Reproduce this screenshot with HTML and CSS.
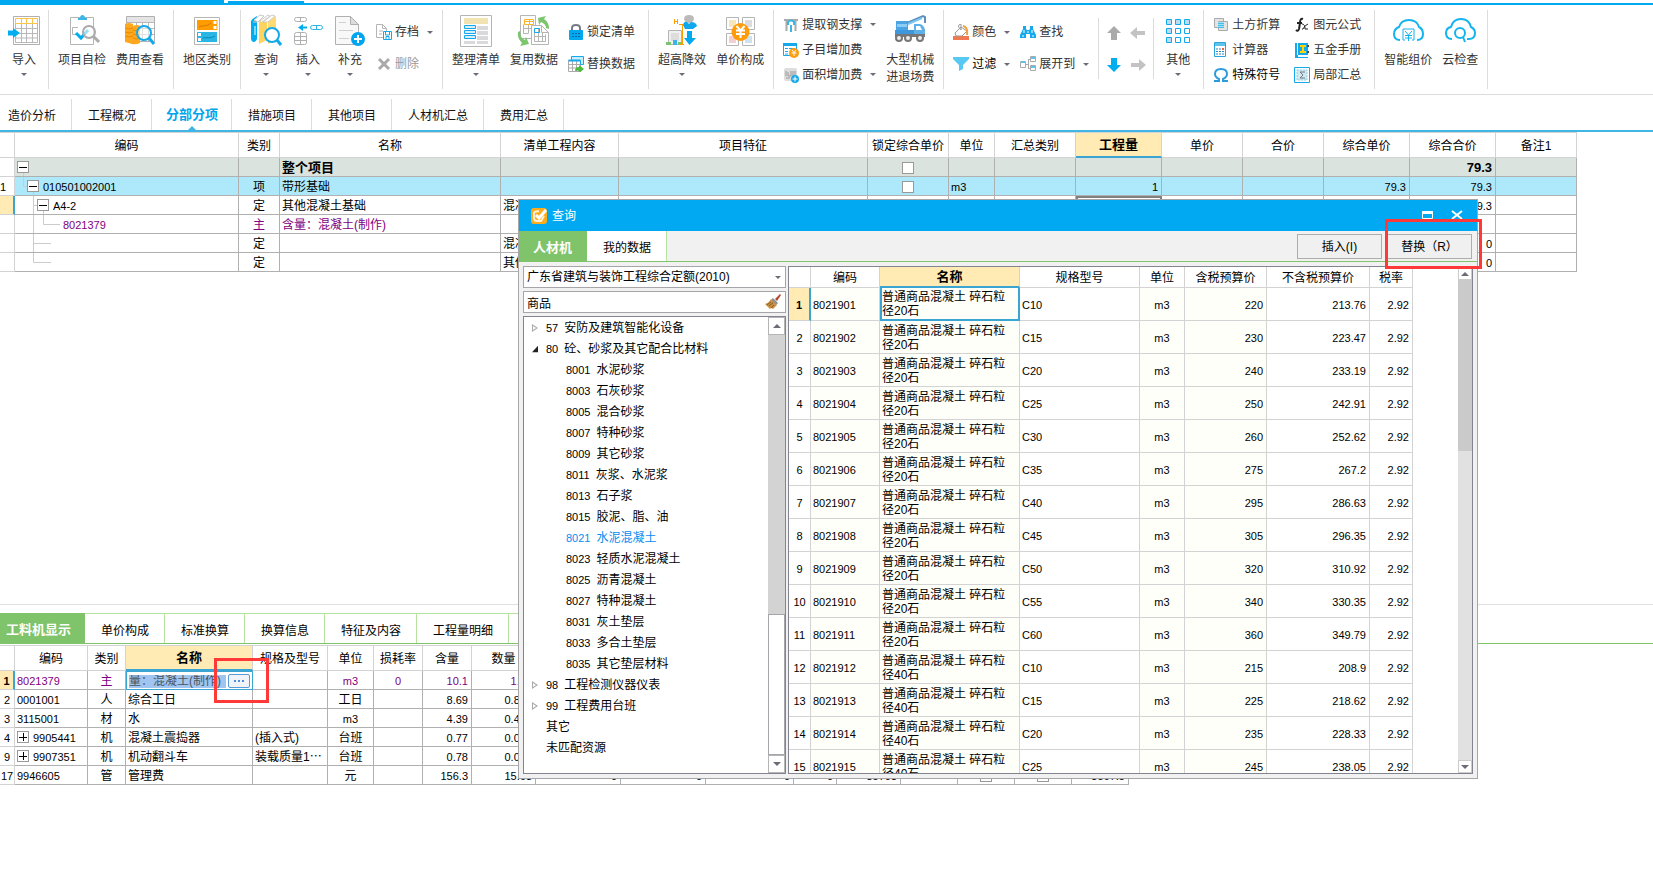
FILE: index.html
```html
<!DOCTYPE html>
<html lang="zh-CN">
<head>
    <meta charset="UTF-8">
    <meta name="viewport" content="width=device-width, initial-scale=1.0">
    <title>分部分项</title>
    <link rel="stylesheet" href="styles.css">
</head>
<body>
    <div class="strip">
        <div class="strip-menu"></div>
        <div class="strip-current"></div>
    </div>

    <header class="ribbon">
        <div class="group group-first">
            <button class="big">
                <svg viewBox="0 0 32 32"><path d="M5.500 1.500h26v28h-26z" fill="#fff" stroke="#b0b0b0"/><path d="M7.500 8v19.500h22V8M7.500 13.500h22M7.500 18.500h22M7.500 23h22M13.500 8v19M18.500 8v19M24.500 8v19" fill="none" stroke="#b8b8b8"/><path d="M7.500 8.500v-5h22v5zM13.500 3v5M18.500 3v5M24.500 3v5" fill="none" stroke="#fbc34a"/><path d="M0 15.500h5V13l7 5-7 5v-2.500H0z" fill="#00aeef"/></svg>
                <span>导入</span><i class="caret"></i>
            </button>
        </div>
        <div class="group">
            <button class="big">
                <svg viewBox="0 0 32 32"><path d="M4.500 2.500h23v27h-23z" fill="#fff" stroke="#b5b5b5"/><path d="M12 5V3h2c0-4 5-4 5 0h2v2z" fill="#3bb4e8"/><path d="M12 12.500H6.500v7H10" fill="none" stroke="#b5b5b5"/><path d="M10 18l5 5 7-8" fill="none" stroke="#00aeef" stroke-width="3"/><circle cx="23" cy="17" r="6" fill="#fff" fill-opacity=".6" stroke="#aaa" stroke-width="2"/><path d="M27 21l6 6" stroke="#aaa" stroke-width="3"/></svg>
                <span>项目自检</span>
            </button>
            <button class="big">
                <svg viewBox="0 0 32 32"><path d="M2.500 1.500h28v25h-28z" fill="#fff" stroke="#b0b0b0"/><path d="M3 2h27v5H3z" fill="#e4e4e4"/><path d="M3 7.500h27M3 13.500h27M3 19.500h27M12.500 7v19M18.500 7v19M24.500 7v19" stroke="#b8b8b8"/><path d="M1 9q4-2 8 0v2q4-2 7 0v17q-4 2-8 1l-7-2z" fill="#ffa81f"/><path d="M1 13q4 2 8 0M1 17q4 2 8 0M1 21q4 2 8 0M9 15q4 2 7 0M9 19q4 2 7 0M9 23q4 2 7 0" fill="none" stroke="#e88b00"/><circle cx="20" cy="18" r="7" fill="#fff" fill-opacity=".55" stroke="#14a9ea" stroke-width="2"/><path d="M25 23l5 6" stroke="#14a9ea" stroke-width="3"/></svg>
                <span>费用查看</span>
            </button>
        </div>
        <div class="group">
            <button class="big">
                <svg viewBox="0 0 32 32"><path d="M3.500 2.500h25v27h-25z" fill="#fff" stroke="#b5b5b5"/><path d="M6 5h20v10H6z" fill="#ff9c00"/><path d="M22 5.500h4v4h-4zM22 10.500h4v4h-4z" fill="#fff" stroke="#ff9c00"/><path d="M8 12c3-2 8 0 12-4" fill="none" stroke="#d57900"/><path d="M6 17h20v10H6z" fill="#29b6e5"/><path d="M6.500 17.500h4v4h-4zM6.500 22.500h4v4h-4z" fill="#fff" stroke="#29b6e5"/><path d="M12 23c4-1 7 1 12-2" fill="none" stroke="#0b86b5"/></svg>
                <span>地区类别</span>
            </button>
        </div>
        <div class="group">
            <button class="big">
                <svg viewBox="0 0 32 32"><path d="M1 6q2-3 6-5v23q-1 3-3 3-3 0-3-4z" fill="#00aeef"/><path d="M3 7h4M4 5l6-5 4 1-6 6z" fill="#fff" stroke="#c8c8c8"/><path d="M5 11v9" stroke="#fff"/><path d="M9 6l8-5v24l-8 4z" fill="#ffd45e"/><path d="M18 5l8-4v24l-8 4z" fill="#ffda72"/><path d="M10 6l8-6 2 1-8 6M13 7l9-7 3 1-7 6z" fill="#fff" stroke="#ccc"/><circle cx="22" cy="20" r="7" fill="#fff" stroke="#14a9ea" stroke-width="2"/><path d="M27 25l4 5" stroke="#14a9ea" stroke-width="3"/></svg>
                <span>查询</span><i class="caret"></i>
            </button>
            <button class="big">
                <svg viewBox="0 0 32 32"><g fill="#fff" stroke="#b0b0b0"><rect x="2.500" y="2.500" width="12" height="4" rx="2"/><path d="M8.500 2v4"/><rect x="2.500" y="17.500" width="12" height="12" rx="2"/><path d="M8.500 17v12M2.500 21.500h12M2.500 25.500h12"/></g><rect x="18.500" y="10.500" width="12" height="4" rx="2" fill="#fff" stroke="#29b6e5"/><path d="M24.500 10v4" stroke="#29b6e5"/><path d="M15 11.500h-4V9l-5 3.500 5 3.500v-2.500h4z" fill="#00aeef"/></svg>
                <span>插入</span><i class="caret"></i>
            </button>
            <button class="big">
                <svg viewBox="0 0 32 32"><path d="M1.500 1.500h15l8 8v20h-23z" fill="#f8f8f8" stroke="#b0b0b0"/><path d="M16.500 1.500v8h8z" fill="#ddd" stroke="#b0b0b0"/><path d="M5 7.500h7M5 15.500h14M5 23.500h10" stroke="#d0d0d0"/><circle cx="24" cy="24" r="7" fill="#00a5ef"/><path d="M24 20v8M20 24h8" stroke="#fff" stroke-width="2"/></svg>
                <span>补充</span><i class="caret"></i>
            </button>
            <div class="stack two">
                <button class="small">
                    <svg viewBox="0 0 16 16"><path d="M.5.500h6l4 4v9H.500z" fill="#fff" stroke="#b5b5b5"/><path d="M6.500.500v4h4M3 7h4M3 10h3" fill="none" stroke="#b5b5b5"/><path d="M7.500 7.500h8v8h-8z" fill="#fff" stroke="#14a9ea"/><path d="M9.500 8v3h4V8M10 15v-2.500h3V15" fill="none" stroke="#14a9ea"/></svg>
                    <span>存档</span><i class="caret"></i>
                </button>
                <button class="small disabled" disabled>
                    <svg viewBox="0 0 16 16"><path d="M3 3l10 10M13 3L3 13" stroke="#aaa" stroke-width="3"/></svg>
                    <span>删除</span>
                </button>
            </div>
        </div>
        <div class="group">
            <button class="big">
                <svg viewBox="0 0 32 32"><path d="M.5.500h31v31H.500z" fill="#fff" stroke="#b5b5b5"/><path d="M4 3h24v6H4z" fill="#f2e3b3"/><path d="M17 11h11v4H17zM17 16h11v4H17zM17 21h11v4H17zM4 26h11v3H4zM17 26h11v3H17z" fill="#d9d9dd"/><path d="M4.500 10.500h11v3h-11zM4.500 15.500h11v3h-11zM4.500 20.500h11v3h-11z" fill="#d6effa" stroke="#14a9ea"/></svg>
                <span>整理清单</span><i class="caret"></i>
            </button>
            <button class="big">
                <svg viewBox="0 0 32 32"><path d="M2.500.500h15v23h-15z" fill="#fff" stroke="#b5b5b5"/><path d="M5.500 9.500v9h5M5.500 13.500h10M10.500 9v9" fill="none" stroke="#b5b5b5"/><path d="M6.500 4.500h9v5h-9zM11.500 4v5M6.500 6.500h9" fill="none" stroke="#fbb52b"/><path d="M13.500 10.500h10l7 7v12h-17z" fill="#fff" stroke="#b5b5b5"/><path d="M23.500 10.500v7h7M16.500 17.500v9h11v-7M16.500 21.500h11M20.500 14v12M24.500 18v8" fill="none" stroke="#b5b5b5"/><path d="M16.500 13.500h5v4h-5z" fill="none" stroke="#14a9ea"/><path d="M20 3l8-2-2 3q5 3 5 10l-3-1q0-4-5-6l-2 3zM2 16q0 7 5 9l1-3 3 7-9 2 2-3q-5-5-4-11z" fill="#7bc56c"/></svg>
                <span>复用数据</span>
            </button>
            <div class="stack two wide">
                <button class="small">
                    <svg viewBox="0 0 16 16"><path d="M4 8V4q0-3 4-3t4 3v4" fill="none" stroke="#777b86" stroke-width="2"/><rect x="1" y="6" width="14" height="10" rx="1" fill="#00a8ef"/><path d="M4 9.500h8M4 12.500h8" stroke="#0767a0" stroke-dasharray="2 1"/></svg>
                    <span>锁定清单</span>
                </button>
                <button class="small">
                    <svg viewBox="0 0 16 16"><path d="M.5 4.500h12v11H.500zM.5 8.500h12M.5 12h12M4.500 4v11M8.500 4v11" fill="#fff" stroke="#aaa"/><path d="M3.500.500h12v8h-3v-4h-9z" fill="#c9eefb" stroke="#14a9ea"/><path d="M.5 4.500h12" stroke="#14a9ea" stroke-width="2"/><path d="M7 15q0-4 4-4V9l5 4-5 4v-2q-2-1-4 0z" fill="#4cbb39"/></svg>
                    <span>替换数据</span>
                </button>
            </div>
        </div>
        <div class="group">
            <button class="big">
                <svg viewBox="0 0 32 32"><path d="M2.500 15.500h13v14h-13z" fill="#f0f0f0" stroke="#b5b5b5"/><path d="M5 18h8v8H5z" fill="#ddd"/><path d="M7 25h4v5H7z" fill="#3bb4e8"/><path d="M0 27h5v3H0zM12 27h5v3h-5z" fill="#7bc56c"/><path d="M8.500 4v5M11.500 4v5M8.500 6.500h3M13 9.500h4M16.500 9v20M14 29.500h4" fill="none" stroke="#ff9c00"/><path d="M18 4q0-4 5-4t5 4q-1 4-5 4t-5-4z" fill="#bbb"/><path d="M17 10q1-4 4-3l2 2 2-2q5 0 6 4l-4 3H19z" fill="#0fa8ec"/><path d="M21 16h5v7h4l-6.500 7L18 23h3z" fill="#00a8ef"/></svg>
                <span>超高降效</span><i class="caret"></i>
            </button>
            <button class="big">
                <svg viewBox="0 0 32 32"><g fill="#fff" stroke="#b5b5b5"><path d="M2.500 2.500h12v12h-12zM18.500 2.500h12v12h-12zM2.500 18.500h12v12h-12zM18.500 18.500h12v12h-12z"/></g><path d="M5 5h7v7H5z" fill="#f5e6be"/><path d="M21 5h7v7h-7z" fill="#dcdce0"/><path d="M5 21h7v7H5z" fill="#f0d0d0"/><path d="M21 21h7v7h-7z" fill="#cfe3ef"/><circle cx="16.500" cy="17" r="9" fill="#ff9c0c"/><path d="M12.500 11l4 4.500 4-4.500M12 15.500h9M12 19h9M16.500 15v8" fill="none" stroke="#fff" stroke-width="2"/></svg>
                <span>单价构成</span>
            </button>
        </div>
        <div class="group">
            <div class="stack three">
                <button class="small">
                    <svg viewBox="0 0 16 16"><path d="M1 3h14M3.500 3v11M12.500 3v11" stroke="#aaa" stroke-width="2"/><path d="M8 15V8M5 8V5q3-3 6 0v3" fill="none" stroke="#37b7e8" stroke-width="2"/></svg>
                    <span>提取钢支撑</span><i class="caret"></i>
                </button>
                <button class="small">
                    <svg viewBox="0 0 16 16"><path d="M.5 1.500h13v12H.500z" fill="#fff" stroke="#14a9ea"/><path d="M0 1h14v3H0z" fill="#14a9ea"/><path d="M2 6.500h3M2 9.500h3M2 12h3M6 6.500h6" stroke="#14a9ea"/><circle cx="11" cy="11" r="5" fill="#ff9c0c"/><path d="M9 8l2 2.500L13 8M8.500 11h5M11 10v4" fill="none" stroke="#fff"/></svg>
                    <span>子目增加费</span>
                </button>
                <button class="small">
                    <svg viewBox="0 0 16 16"><rect x="1" y="1" width="13" height="13" rx="2" fill="#ddd"/><path d="M3 4v5M5 5v4h3V4M10 4v5M12 4v5M3 11h4" fill="none" stroke="#999"/><circle cx="12" cy="12" r="4" fill="#14a9ea"/><path d="M12 9.500v5M9.500 12h5" stroke="#fff"/></svg>
                    <span>面积增加费</span><i class="caret"></i>
                </button>
            </div>
            <button class="big">
                <svg viewBox="0 0 32 32"><path d="M2 6h12v9H2z" fill="#4da4e4"/><path d="M3 9h10v3H3z" fill="#8bcdf5"/><path d="M13 8L29 1l2 1v6" fill="none" stroke="#5e8fb8" stroke-width="2"/><path d="M14 9l14-6" stroke="#79c4f2" stroke-width="2"/><path d="M20 9h6q4 1 5 6v4H20z" fill="#5fb0e8"/><path d="M22 11h4l2 4h-6z" fill="#fff"/><path d="M1 15h19v5H1z" fill="#3d97dd"/><path d="M1 19h30v3H1z" fill="#777"/><g fill="#eee" stroke="#777" stroke-width="2"><circle cx="5" cy="23" r="3"/><circle cx="14" cy="23" r="3"/><circle cx="26" cy="23" r="3"/></g></svg>
                <span>大型机械<br>进退场费</span>
            </button>
        </div>
        <div class="group">
            <div class="stack two">
                <button class="small">
                    <svg viewBox="0 0 16 16"><path d="M0 12h16v4H0z" fill="#f07850"/><path d="M2 9l6-6 6 4-5 5H3zM8 6q-5-5 0-6v6" fill="#fff" stroke="#999"/><path d="M10 2q5 1 4 9" fill="none" stroke="#f0a040" stroke-width="2"/></svg>
                    <span>颜色</span><i class="caret"></i>
                </button>
                <button class="small dark">
                    <svg viewBox="0 0 16 16"><path d="M0 1h16v2l-6 6v4l-4 2V9L0 3z" fill="#59c8f2"/></svg>
                    <span>过滤</span><i class="caret"></i>
                </button>
            </div>
            <div class="stack two">
                <button class="small">
                    <svg viewBox="0 0 16 16"><path d="M3 2h3v3l1 1h2l1-1V2h3v3l3 6v3h-6v-4H6v4H0v-3l3-6z" fill="#14a9ea"/><path d="M2 12h2M12 12h2M7 8h2M4 6v3M12 6v3" stroke="#fff"/></svg>
                    <span>查找</span>
                </button>
                <button class="small">
                    <svg viewBox="0 0 16 16"><path d="M6 8.500h3M8.500 3.500v9M8 3.500h3M8 12.500h3" fill="none" stroke="#aaa"/><path d="M.5 5.500h5v6h-5zM10.500.500h5v5h-5zM10.500 9.500h5v5h-5z" fill="#fff" stroke="#aaa"/><path d="M1 5h4v2H1zM11 1h4v2h-4zM11 10h4v2h-4z" fill="#5fc4ec"/></svg>
                    <span>展开到</span><i class="caret"></i>
                </button>
            </div>
            <div class="arrows">
                <button aria-label="上移"><svg viewBox="0 0 16 16"><path d="M8 1l7 7h-4v7H5V8H1z" fill="#aaa"/></svg></button>
                <button aria-label="左移"><svg viewBox="0 0 16 16"><path d="M0 8l7-6v4h8v4H7v4z" fill="#c3c3c3"/></svg></button>
                <button aria-label="下移"><svg viewBox="0 0 16 16"><path d="M8 15l7-7h-4V1H5v7H1z" fill="#00aeef"/></svg></button>
                <button aria-label="右移"><svg viewBox="0 0 16 16"><path d="M16 8L9 2v4H1v4h8v4z" fill="#c3c3c3"/></svg></button>
            </div>
            <button class="big">
                <svg viewBox="0 0 32 32"><g stroke="#14a9ea"><path d="M4.500 4.500h5v5h-5zM13.500 4.500h5v5h-5zM22.500 4.500h5v5h-5zM4.500 13.500h5v5h-5zM4.500 22.500h5v5h-5z" fill="#b8dcf2"/><path d="M13.500 13.500h5v5h-5zM22.500 13.500h5v5h-5zM13.500 22.500h5v5h-5zM22.500 22.500h5v5h-5z" fill="#fff"/></g></svg>
                <span>其他</span><i class="caret"></i>
            </button>
        </div>
        <div class="group">
            <div class="stack three wide">
                <button class="small">
                    <svg viewBox="0 0 16 16"><path d="M1.500 1.500h9v9h-9zM5.500 4.500h9v9h-9z" fill="#e4e4e4" stroke="#aaa"/><path d="M5 5h6v6H5z" fill="#45bfe9"/><path d="M6 5v6M8 5v6M10 5v6" stroke="#fff" stroke-dasharray="1 1"/></svg>
                    <span>土方折算</span>
                </button>
                <button class="small">
                    <svg viewBox="0 0 16 16"><path d="M1.500.500h11v14h-11z" fill="#fff" stroke="#29a5dc"/><path d="M2 1h10v3H2z" fill="#5fc4ec"/><path d="M3 7h8M3 9.500h8M3 12h8" stroke="#2a86b8" stroke-width="1" stroke-dasharray="2 1"/><path d="M9 6h2v2H9z" fill="#f06040"/></svg>
                    <span>计算器</span>
                </button>
                <button class="small dark">
                    <svg viewBox="0 0 16 16"><path d="M1 14h5v-2Q2 10 2 7q0-5 6-5t6 5q0 3-4 5v2h5" fill="none" stroke="#2b9bdc" stroke-width="2"/></svg>
                    <span>特殊符号</span>
                </button>
            </div>
            <div class="stack three wide">
                <button class="small">
                    <svg viewBox="0 0 16 16"><path d="M9 2q-3-1-3 4l-1 6q-1 3-3 1M3 6h5" fill="none" stroke="#222" stroke-width="2"/><path d="M8 7q3 0 3 5M14 7q-3 1-5 5h-1M11 12h3" fill="none" stroke="#222"/></svg>
                    <span>图元公式</span>
                </button>
                <button class="small">
                    <svg viewBox="0 0 16 16"><path d="M1 1h13v12H4v2h10v1H1z" fill="#14a9ea"/><path d="M3.500 1v12" stroke="#fff"/><path d="M6 4h6M6 10h6M9 4v6" stroke="#ffd400" stroke-width="2"/><path d="M14 3v2M14 9v2" stroke="#5a4a30" stroke-width="2"/></svg>
                    <span>五金手册</span>
                </button>
                <button class="small">
                    <svg viewBox="0 0 16 16"><path d="M.5.500h15v15H.500z" fill="#fff" stroke="#14a9ea"/><path d="M3 3h10v10H3z" fill="#cfeaf5" stroke="#8fcbe0" stroke-dasharray="2 1"/><path d="M11 5H6l3 3-3 3h5" fill="none" stroke="#777"/></svg>
                    <span>局部汇总</span>
                </button>
            </div>
        </div>
        <div class="group">
            <button class="big">
                <svg viewBox="0 0 32 32"><path d="M8 25q-6 0-6-6 0-5 5-7Q9 5 17 5t10 7q4 2 4 7 0 6-6 6" fill="none" stroke="#14b4ee" stroke-width="2"/><path d="M11 25V14h11v11M11 25h2M20 25h2M13 16l3.500 4 3.500-4M13 20.500h7M13 23h7M16.500 20v6" fill="none" stroke="#14b4ee"/></svg>
                <span>智能组价</span>
            </button>
            <button class="big">
                <svg viewBox="0 0 32 32"><path d="M8 24q-6 0-6-6 0-5 5-6Q9 4 17 4t10 8q4 2 4 6 0 6-6 6h-2" fill="none" stroke="#14b4ee" stroke-width="2"/><circle cx="16" cy="18" r="5" fill="none" stroke="#14b4ee" stroke-width="2"/><path d="M19 22l2 5" stroke="#14b4ee" stroke-width="2"/></svg>
                <span>云检查</span>
            </button>
        </div>
    </header>

    <nav class="tabs">
        <a href="#">造价分析</a>
        <a href="#">工程概况</a>
        <a href="#" class="active">分部分项</a>
        <a href="#">措施项目</a>
        <a href="#">其他项目</a>
        <a href="#">人材机汇总</a>
        <a href="#">费用汇总</a>
    </nav>

    <main class="workspace">
        <table class="grid bill">
            <colgroup>
                <col class="w15"><col class="w224"><col class="w41"><col class="w221"><col class="w118"><col class="w249"><col class="w81"><col class="w46"><col class="w81"><col class="w86"><col class="w81"><col class="w81"><col class="w86"><col class="w86"><col class="w81">
            </colgroup>
            <thead>
                <tr><th></th><th>编码</th><th>类别</th><th>名称</th><th>清单工程内容</th><th>项目特征</th><th>锁定综合单价</th><th>单位</th><th>汇总类别</th><th class="current">工程量</th><th>单价</th><th>合价</th><th>综合单价</th><th>综合合价</th><th>备注1</th></tr>
            </thead>
            <tbody>
                <tr class="total">
                    <td class="no"></td>
                    <td><div class="node"><button class="toggle open" aria-label="折叠"></button></div></td>
                    <td></td><td>整个项目</td><td></td><td></td>
                    <td class="center"><input type="checkbox" aria-label="锁定综合单价"></td>
                    <td></td><td></td><td></td><td></td><td></td><td></td><td class="num">79.3</td><td></td>
                </tr>
                <tr class="item">
                    <td class="no">1</td>
                    <td><div class="node"><svg class="branch" width="12" height="18"><path d="M8.500 0v9.500H12"/></svg><button class="toggle open" aria-label="折叠"></button><span class="code">010501002001</span></div></td>
                    <td class="center">项</td><td>带形基础</td><td></td><td></td>
                    <td class="center"><input type="checkbox" aria-label="锁定综合单价"></td>
                    <td class="unit">m3</td><td></td><td class="num">1</td><td></td><td></td><td class="num">79.3</td><td class="num">79.3</td><td></td>
                </tr>
                <tr>
                    <td class="no current"></td>
                    <td><div class="node"><svg class="branch" width="22" height="18"><path d="M18.500 0v18M18.500 9.500H22"/></svg><button class="toggle open" aria-label="折叠"></button><span class="code">A4-2</span></div></td>
                    <td class="center">定</td><td>其他混凝土基础</td><td>混凝土</td><td></td><td></td><td></td><td></td><td class="cursor"></td><td></td><td></td><td></td><td class="num">79.3</td><td></td>
                </tr>
                <tr class="material">
                    <td class="no"></td>
                    <td><div class="node"><svg class="branch" width="45" height="18"><path d="M18.500 0v18M28.500 0v9.500H45"/></svg><span class="code">8021379</span></div></td>
                    <td class="center">主</td><td>含量：混凝土(制作)</td><td></td><td></td><td></td><td></td><td></td><td></td><td></td><td></td><td></td><td></td><td></td>
                </tr>
                <tr>
                    <td class="no"></td>
                    <td><div class="node"><svg class="branch" width="36" height="18"><path d="M18.500 0v18M18.500 9.500H36"/></svg></div></td>
                    <td class="center">定</td><td></td><td>混凝土</td><td></td><td></td><td></td><td></td><td></td><td></td><td></td><td></td><td class="num">0</td><td></td>
                </tr>
                <tr>
                    <td class="no"></td>
                    <td><div class="node"><svg class="branch" width="36" height="18"><path d="M18.500 0v9.500H36"/></svg></div></td>
                    <td class="center">定</td><td></td><td>其他</td><td></td><td></td><td></td><td></td><td></td><td></td><td></td><td></td><td class="num">0</td><td></td>
                </tr>
            </tbody>
        </table>
    </main>

    <section class="detail">
        <nav class="detail-tabs">
            <a href="#" class="active">工料机显示</a>
            <a href="#">单价构成</a>
            <a href="#">标准换算</a>
            <a href="#">换算信息</a>
            <a href="#">特征及内容</a>
            <a href="#">工程量明细</a>
            <span></span>
        </nav>
        <table class="grid parts">
            <colgroup>
                <col class="w15"><col class="w73"><col class="w38"><col class="w127"><col class="w75"><col class="w46"><col class="w49"><col class="w49"><col class="w64"><col class="w85"><col class="w85"><col class="w88"><col class="w43"><col class="w64"><col class="w57"><col class="w57"><col class="w57"><col class="w57">
            </colgroup>
            <thead>
                <tr><th></th><th>编码</th><th>类别</th><th class="current">名称</th><th>规格及型号</th><th>单位</th><th>损耗率</th><th>含量</th><th>数量</th><th></th><th></th><th></th><th></th><th></th><th></th><th></th><th></th><th></th></tr>
            </thead>
            <tbody>
                <tr class="material">
                    <td class="no current">1</td><td class="code">8021379</td><td class="center">主</td>
                    <td class="editing"><div class="editor"><input type="text" value="量：混凝土(制作)" aria-label="名称"><button aria-label="选择材料"><i></i><i></i><i></i></button></div></td>
                    <td></td><td class="unit center">m3</td><td class="code center">0</td><td class="num">10.1</td><td class="num">1.01</td><td></td><td></td><td></td><td></td><td></td><td></td><td></td><td></td><td></td>
                </tr>
                <tr>
                    <td class="no">2</td><td class="code">0001001</td><td class="center">人</td><td>综合工日</td><td></td><td class="center">工日</td><td></td><td class="num">8.69</td><td class="num">0.869</td><td></td><td></td><td></td><td></td><td></td><td></td><td></td><td></td><td></td>
                </tr>
                <tr>
                    <td class="no">3</td><td class="code">3115001</td><td class="center">材</td><td>水</td><td></td><td class="unit center">m3</td><td></td><td class="num">4.39</td><td class="num">0.439</td><td></td><td></td><td></td><td></td><td></td><td></td><td></td><td></td><td></td>
                </tr>
                <tr>
                    <td class="no">4</td><td><div class="node"><button class="toggle" aria-label="展开"></button><span class="code">9905441</span></div></td><td class="center">机</td><td>混凝土震捣器</td><td>(插入式)</td><td class="center">台班</td><td></td><td class="num">0.77</td><td class="num">0.077</td><td></td><td></td><td></td><td></td><td></td><td></td><td></td><td></td><td></td>
                </tr>
                <tr>
                    <td class="no">9</td><td><div class="node"><button class="toggle" aria-label="展开"></button><span class="code">9907351</span></div></td><td class="center">机</td><td>机动翻斗车</td><td>装载质量1⋯</td><td class="center">台班</td><td></td><td class="num">0.78</td><td class="num">0.078</td><td></td><td></td><td></td><td></td><td></td><td></td><td></td><td></td><td></td>
                </tr>
                <tr>
                    <td class="no">17</td><td class="code">9946605</td><td class="center">管</td><td>管理费</td><td></td><td class="center">元</td><td></td><td class="num">156.3</td><td class="num">15.63</td><td class="num">0</td><td class="num">0</td><td class="num">0</td><td class="num">0</td><td class="num">35703</td><td></td><td class="center"><input type="checkbox" aria-label="暂估"></td><td class="center"><input type="checkbox" aria-label="锁定"></td><td class="num">3567.5</td>
                </tr>
            </tbody>
        </table>
    </section>

    <div class="dialog" role="dialog" aria-labelledby="dialog-title">
        <div class="title-bar">
            <svg width="16" height="16" viewBox="0 0 16 16"><rect width="16" height="16" rx="3" fill="#ffab1a"/><path d="M3 4l5-1M3 4v6q0 3 3 3h4l3-5" fill="none" stroke="#fff3da" stroke-width="2"/><path d="M5 7l3 3 7-8" fill="none" stroke="#fff" stroke-width="3"/></svg>
            <h1 id="dialog-title">查询</h1>
            <button aria-label="最大化"><svg width="12" height="12" viewBox="0 0 12 12"><path d="M.5 1.500h10v7H.500z" fill="none" stroke="#fff"/><path d="M0 1h11v3H0z" fill="#fff"/></svg></button>
            <button aria-label="关闭"><svg width="12" height="12" viewBox="0 0 12 12"><path d="M1 1l10 8M11 1L1 9" stroke="#fff" stroke-width="2"/></svg></button>
        </div>
        <div class="dialog-bar">
            <a href="#" class="active">人材机</a>
            <a href="#">我的数据</a>
            <div class="actions">
                <button>插入(I)</button>
                <button>替换（R）</button>
            </div>
        </div>
        <div class="dialog-body">
            <div class="side">
                <div class="field">
                    <select aria-label="定额库"><option>广东省建筑与装饰工程综合定额(2010)</option></select>
                    <i class="caret"></i>
                </div>
                <div class="field">
                    <input type="text" value="商品" aria-label="搜索">
                    <svg width="16" height="16" viewBox="0 0 16 16"><path d="M10 5l5-5 1 1-4 6z" fill="#b5482a"/><path d="M8 4l5 5-2 2-5-5z" fill="#888f98"/><path d="M6 5l6 6-4 4-2-1-1 1-5-5q4-1 6-5z" fill="#c99347"/><path d="M6 8l-4 3M8 9l-4 3M9 11l-3 3" stroke="#8a5a20"/></svg>
                </div>
                <div class="tree-box">
                    <ul class="tree">
                        <li class="closed"><span class="code">57</span>安防及建筑智能化设备</li>
                        <li class="opened"><span class="code">80</span>砼、砂浆及其它配合比材料</li>
                        <li class="leaf"><span class="code">8001</span>水泥砂浆</li>
                        <li class="leaf"><span class="code">8003</span>石灰砂浆</li>
                        <li class="leaf"><span class="code">8005</span>混合砂浆</li>
                        <li class="leaf"><span class="code">8007</span>特种砂浆</li>
                        <li class="leaf"><span class="code">8009</span>其它砂浆</li>
                        <li class="leaf"><span class="code">8011</span>灰浆、水泥浆</li>
                        <li class="leaf"><span class="code">8013</span>石子浆</li>
                        <li class="leaf"><span class="code">8015</span>胶泥、脂、油</li>
                        <li class="leaf selected"><span class="code">8021</span>水泥混凝土</li>
                        <li class="leaf"><span class="code">8023</span>轻质水泥混凝土</li>
                        <li class="leaf"><span class="code">8025</span>沥青混凝土</li>
                        <li class="leaf"><span class="code">8027</span>特种混凝土</li>
                        <li class="leaf"><span class="code">8031</span>灰土垫层</li>
                        <li class="leaf"><span class="code">8033</span>多合土垫层</li>
                        <li class="leaf"><span class="code">8035</span>其它垫层材料</li>
                        <li class="closed"><span class="code">98</span>工程检测仪器仪表</li>
                        <li class="closed"><span class="code">99</span>工程费用台班</li>
                        <li>其它</li>
                        <li>未匹配资源</li>
                    </ul>
                    <div class="scroll tree-scroll">
                        <button class="up" aria-label="向上"></button>
                        <div class="track"></div>
                        <div class="thumb"></div>
                        <button class="down" aria-label="向下"></button>
                    </div>
                </div>
            </div>
            <div class="result">
                <div class="result-view">
                    <table class="grid list">
                        <colgroup>
                            <col class="w22"><col class="w69"><col class="w140"><col class="w120"><col class="w45"><col class="w82"><col class="w103"><col class="w43">
                        </colgroup>
                        <thead>
                            <tr><th></th><th>编码</th><th class="current">名称</th><th>规格型号</th><th>单位</th><th>含税预算价</th><th>不含税预算价</th><th>税率</th></tr>
                        </thead>
                        <tbody>
                            <tr><td class="no current">1</td><td class="code">8021901</td><td class="picked">普通商品混凝土 碎石粒径20石</td><td class="code">C10</td><td class="unit center">m3</td><td class="num">220</td><td class="num">213.76</td><td class="num">2.92</td></tr>
                            <tr><td class="no">2</td><td class="code">8021902</td><td>普通商品混凝土 碎石粒径20石</td><td class="code">C15</td><td class="unit center">m3</td><td class="num">230</td><td class="num">223.47</td><td class="num">2.92</td></tr>
                            <tr><td class="no">3</td><td class="code">8021903</td><td>普通商品混凝土 碎石粒径20石</td><td class="code">C20</td><td class="unit center">m3</td><td class="num">240</td><td class="num">233.19</td><td class="num">2.92</td></tr>
                            <tr><td class="no">4</td><td class="code">8021904</td><td>普通商品混凝土 碎石粒径20石</td><td class="code">C25</td><td class="unit center">m3</td><td class="num">250</td><td class="num">242.91</td><td class="num">2.92</td></tr>
                            <tr><td class="no">5</td><td class="code">8021905</td><td>普通商品混凝土 碎石粒径20石</td><td class="code">C30</td><td class="unit center">m3</td><td class="num">260</td><td class="num">252.62</td><td class="num">2.92</td></tr>
                            <tr><td class="no">6</td><td class="code">8021906</td><td>普通商品混凝土 碎石粒径20石</td><td class="code">C35</td><td class="unit center">m3</td><td class="num">275</td><td class="num">267.2</td><td class="num">2.92</td></tr>
                            <tr><td class="no">7</td><td class="code">8021907</td><td>普通商品混凝土 碎石粒径20石</td><td class="code">C40</td><td class="unit center">m3</td><td class="num">295</td><td class="num">286.63</td><td class="num">2.92</td></tr>
                            <tr><td class="no">8</td><td class="code">8021908</td><td>普通商品混凝土 碎石粒径20石</td><td class="code">C45</td><td class="unit center">m3</td><td class="num">305</td><td class="num">296.35</td><td class="num">2.92</td></tr>
                            <tr><td class="no">9</td><td class="code">8021909</td><td>普通商品混凝土 碎石粒径20石</td><td class="code">C50</td><td class="unit center">m3</td><td class="num">320</td><td class="num">310.92</td><td class="num">2.92</td></tr>
                            <tr><td class="no">10</td><td class="code">8021910</td><td>普通商品混凝土 碎石粒径20石</td><td class="code">C55</td><td class="unit center">m3</td><td class="num">340</td><td class="num">330.35</td><td class="num">2.92</td></tr>
                            <tr><td class="no">11</td><td class="code">8021911</td><td>普通商品混凝土 碎石粒径20石</td><td class="code">C60</td><td class="unit center">m3</td><td class="num">360</td><td class="num">349.79</td><td class="num">2.92</td></tr>
                            <tr><td class="no">12</td><td class="code">8021912</td><td>普通商品混凝土 碎石粒径40石</td><td class="code">C10</td><td class="unit center">m3</td><td class="num">215</td><td class="num">208.9</td><td class="num">2.92</td></tr>
                            <tr><td class="no">13</td><td class="code">8021913</td><td>普通商品混凝土 碎石粒径40石</td><td class="code">C15</td><td class="unit center">m3</td><td class="num">225</td><td class="num">218.62</td><td class="num">2.92</td></tr>
                            <tr><td class="no">14</td><td class="code">8021914</td><td>普通商品混凝土 碎石粒径40石</td><td class="code">C20</td><td class="unit center">m3</td><td class="num">235</td><td class="num">228.33</td><td class="num">2.92</td></tr>
                            <tr><td class="no">15</td><td class="code">8021915</td><td>普通商品混凝土 碎石粒径40石</td><td class="code">C25</td><td class="unit center">m3</td><td class="num">245</td><td class="num">238.05</td><td class="num">2.92</td></tr>
                        </tbody>
                    </table>
                </div>
                <div class="scroll list-scroll">
                    <button class="up" aria-label="向上"></button>
                    <div class="thumb"></div>
                    <div class="track"></div>
                    <button class="down" aria-label="向下"></button>
                </div>
            </div>
        </div>
        <div class="mark mark-replace"></div>
    </div>
    <div class="mark mark-picker"></div>
</body>
</html>
```

FILE: styles.css
```css
* {
    box-sizing: border-box;
}

body {
    position: relative;
    margin: 0;
    min-height: 100vh;
    overflow-x: hidden;
    background: #fff;
    color: #000;
    font-family: "Liberation Sans", "Noto Sans CJK SC", sans-serif;
    font-size: 12px;
    line-height: 14px;
}

button, input, select {
    margin: 0;
    padding: 0;
    border: none;
    background: none;
    color: inherit;
    font: inherit;
}

a {
    color: inherit;
    text-decoration: none;
}

/* window strip */
.strip {
    display: flex;
    height: 5px;
    border-bottom: 2px solid #00a9ef;
}

.strip-menu {
    width: 224px;
    background: #00a9ef;
}

.strip-current {
    width: 76px;
    height: 2px;
    margin: 1px 0 0 4px;
    background: #00a9ef;
}

/* ribbon */
.ribbon {
    display: flex;
    height: 90px;
    padding: 5px 0;
    border-bottom: 1px solid #dcdcdc;
    color: #333;
}

.group {
    display: flex;
    flex-shrink: 0;
    gap: 10px;
    padding: 0 9px;
    border-right: 1px solid #dcdcdc;
}

.group-first {
    padding: 0 8px;
}

.big {
    display: flex;
    flex-direction: column;
    align-items: center;
    min-width: 32px;
    padding-top: 5px;
    line-height: 17px;
}

.big svg {
    width: 32px;
    height: 32px;
    margin-bottom: 5px;
    overflow: visible;
}

.big .caret {
    margin-top: 4px;
}

.caret {
    flex-shrink: 0;
    border: 3px solid transparent;
    border-top-color: #6c6c78;
    border-bottom: none;
}

.stack {
    display: flex;
    flex-direction: column;
    justify-content: center;
}

.wide {
    padding-right: 4px;
}

.small {
    display: flex;
    align-items: center;
    gap: 3px;
    height: 25px;
}

.two .small {
    height: 32px;
}

.two {
    padding-bottom: 3px;
}

.small svg {
    width: 16px;
    height: 16px;
}

.small .caret {
    margin-left: 5px;
}

.disabled {
    color: #999;
}

.dark {
    color: #000;
}

.arrows {
    display: grid;
    grid-template-columns: 16px 16px;
    align-content: center;
    gap: 16px 8px;
    height: 61px;
    margin: 8px -2px 0 -1px;
    padding: 0 7px;
    border: 1px solid #dcdcdc;
    border-width: 0 1px;
}

.arrows button, .arrows svg {
    width: 16px;
    height: 16px;
    display: block;
}

/* page tabs */
.tabs {
    display: flex;
    height: 37px;
    margin-left: -8px;
    padding-top: 4px;
    border-bottom: 2px solid #41b5e3;
}

.tabs a {
    position: relative;
    padding: 1px 15px 0 16px;
    border-right: 1px solid #dcdcdc;
    line-height: 32px;
    color: #111;
}

.tabs .active {
    padding: 0 13px 0 14px;
    color: #00a5ec;
    font-size: 13px;
    font-weight: bold;
}

.tabs .active::after {
    content: "";
    position: absolute;
    left: 50%;
    bottom: 0;
    margin-left: -4px;
    border: 4px solid transparent;
    border-top: none;
    border-bottom-color: #41b5e3;
}

/* grids */
.grid {
    table-layout: fixed;
    width: 1px;
    border-spacing: 0;
}

.grid th, .grid td {
    padding: 1px 2px 0;
    border: 0 solid #b0b0b0;
    border-width: 0 1px 1px 0;
    overflow: hidden;
    white-space: nowrap;
}

.grid th {
    height: 25px;
    padding: 1px 0 0;
    border-color: #d3d3d3;
    font-weight: normal;
}

.grid td {
    height: 19px;
}

.grid .center {
    text-align: center;
}

.grid .num {
    padding-right: 3px;
    text-align: right;
    font-size: 11px;
}

.code, .grid .code, .grid .no, .grid .unit {
    font-size: 11px;
}

.grid .no {
    padding: 1px 0 0;
    border-color: #d3d3d3;
    text-align: center;
}

.grid th.current {
    border-bottom: 2px solid #3aa5d2;
    background: #ffebb3;
    font-size: 13px;
    font-weight: bold;
}

.grid .no.current {
    border-right: 2px solid #3aa5d2;
    background: #ffebb3;
    font-weight: bold;
}

.bill .no {
    text-align: left;
}

.grid .cursor {
    border: 2px solid #808080;
}

.total td:not(.no) {
    background: #dae3de;
    font-size: 13px;
    font-weight: bold;
}

.item td:not(.no) {
    background: #aee8fb;
}

.material td:not(.no) {
    color: #800080;
}

.grid input[type="checkbox"] {
    appearance: none;
    display: block;
    width: 12px;
    height: 12px;
    margin: 0 auto;
    border: 1px solid #999;
    background: #fff;
}

.node {
    display: flex;
    align-items: center;
    height: 18px;
    margin: -1px 0 0 -2px;
}

.branch {
    flex-shrink: 0;
    fill: none;
    stroke: #ccc;
}

.node .code {
    padding-top: 1px;
}

.branch + .code {
    margin-left: 3px;
}

.toggle {
    position: relative;
    flex-shrink: 0;
    width: 12px;
    height: 12px;
    border: 1px solid #999;
    background: linear-gradient(#000, #000) center / 8px 1px no-repeat #fff;
}

.toggle:first-child {
    margin-left: 2px;
}

.toggle:not(.open) {
    background: linear-gradient(#000, #000) center / 8px 1px no-repeat, linear-gradient(#000, #000) center / 1px 8px no-repeat, #fff;
}

.toggle.open::after {
    content: "";
    position: absolute;
    left: 5px;
    top: 11px;
    height: 4px;
    border-left: 1px solid #ccc;
}

.toggle + .code {
    margin-left: 4px;
}

.w15 { width: 15px; }
.w22 { width: 22px; }
.w38 { width: 38px; }
.w41 { width: 41px; }
.w43 { width: 43px; }
.w45 { width: 45px; }
.w46 { width: 46px; }
.w49 { width: 49px; }
.w57 { width: 57px; }
.w64 { width: 64px; }
.w69 { width: 69px; }
.w73 { width: 73px; }
.w75 { width: 75px; }
.w81 { width: 81px; }
.w82 { width: 82px; }
.w85 { width: 85px; }
.w86 { width: 86px; }
.w88 { width: 88px; }
.w103 { width: 103px; }
.w118 { width: 118px; }
.w120 { width: 120px; }
.w127 { width: 127px; }
.w140 { width: 140px; }
.w221 { width: 221px; }
.w224 { width: 224px; }
.w249 { width: 249px; }

.workspace {
    min-height: 473px;
    border-bottom: 1px solid #e0e0e0;
}

.bill {
    border-top: 1px solid #d3d3d3;
}

/* lower panel */
.detail {
    padding-top: 8px;
}

.detail-tabs {
    display: flex;
    height: 31px;
    margin-left: -8px;
    border-bottom: 1px solid #7fc36a;
}

.detail-tabs a, .detail-tabs span {
    padding: 1px 15px 0 16px;
    border: 0 solid #b5e39f;
    border-width: 1px 1px 0 0;
    line-height: 32px;
}

.detail-tabs .active {
    padding: 0 13px 0 14px;
    border-color: #7fc36a;
    background: #7fc36a;
    color: #fff;
    font-size: 13px;
    font-weight: bold;
}

.parts {
    margin-top: 1px;
    border-top: 1px solid #d3d3d3;
}

.grid .editing {
    padding: 1px 2px 0;
    border: 1px solid #3aa5d2;
}

.editor {
    display: flex;
    align-items: center;
    justify-content: space-between;
    height: 16px;
}

.editor input {
    width: 97px;
    height: 13px;
    background: #a0c5f0;
    color: #4a5560;
}

.editor button {
    display: flex;
    align-items: center;
    justify-content: center;
    gap: 2px;
    width: 22px;
    height: 14px;
    border: 1px solid #5b9bd5;
    border-radius: 2px;
    background: #f0f4f9;
}

.editor i {
    width: 2px;
    height: 2px;
    background: #4a90d9;
}

/* lookup window */
.dialog {
    position: absolute;
    top: 199px;
    left: 518px;
    display: flex;
    flex-direction: column;
    width: 960px;
    height: 580px;
    border: 1px solid #a5a5aa;
    background: #f1f1f1;
}

.title-bar {
    display: flex;
    align-items: center;
    gap: 5px;
    height: 31px;
    padding: 0 8px 0 12px;
    background: #00a9f1;
    color: #fff;
}

.title-bar h1 {
    flex: 1;
    margin: 0;
    font-size: 12px;
    font-weight: normal;
}

.title-bar button {
    width: 24px;
    height: 12px;
}

.title-bar button svg {
    display: block;
    margin: 0 auto;
}

.dialog-bar {
    display: flex;
    height: 31px;
    border-bottom: 1px solid #7fc36a;
}

.dialog-bar a {
    padding: 1px 15px 0 16px;
    border-right: 1px solid #b5e39f;
    background: #fff;
    line-height: 33px;
}

.dialog-bar .active {
    padding: 0 14px;
    border-color: #7fc36a;
    background: #7fc36a;
    color: #fff;
    font-size: 13px;
    font-weight: bold;
}

.actions {
    display: flex;
    gap: 5px;
    margin-left: auto;
    padding: 3px 5px 2px 0;
}

.actions button {
    width: 85px;
    border: 1px solid #adadad;
    background: #f0f0f0;
}

.dialog-body {
    display: flex;
    flex: 1;
    gap: 2px;
    min-height: 0;
    padding: 4px;
}

.side {
    display: flex;
    flex-direction: column;
    gap: 3px;
    width: 263px;
}

.field {
    display: flex;
    align-items: center;
    height: 22px;
    padding: 0 4px 0 3px;
    border: 1px solid #a5a5aa;
    background: #fff;
}

.field select, .field input {
    flex: 1;
    min-width: 0;
    height: 20px;
    appearance: none;
}

.tree-box {
    display: flex;
    flex: 1;
    min-height: 0;
    border: 1px solid #82858f;
    background: #fff;
}

.tree {
    flex: 1;
    margin: 0;
    padding: 0;
    list-style: none;
}

.tree li {
    position: relative;
    display: flex;
    align-items: center;
    gap: 6px;
    height: 21px;
    padding: 1px 0 0 22px;
}

.tree .leaf {
    padding-left: 42px;
}

.tree .selected {
    color: #0a8cf0;
}

.closed::before, .opened::before {
    content: "";
    position: absolute;
    left: 8px;
    top: 7px;
    width: 6px;
    height: 8px;
    background: #aaa;
    clip-path: polygon(0 0, 100% 50%, 0 100%, 0 0, 1px 2px, 1px 6px, 4px 4px, 1px 2px);
}

.opened::before {
    background: #222;
    clip-path: polygon(100% 10%, 100% 90%, 0 90%);
}

.scroll {
    display: flex;
    flex-direction: column;
}

.scroll button {
    display: flex;
    align-items: center;
    justify-content: center;
    border: 1px solid #b5b5b5;
    background: #fff;
}

.scroll button::before {
    content: "";
    border: 4px solid transparent;
}

.scroll .up::before {
    border-top: none;
    border-bottom-color: #6c6c78;
}

.scroll .down::before {
    border-bottom: none;
    border-top-color: #6c6c78;
}

.tree-scroll {
    width: 17px;
}

.tree-scroll button {
    height: 18px;
}

.tree-scroll .track {
    flex: 2;
    background: #d3d3d3;
}

.tree-scroll .thumb {
    flex: 1;
    border: 1px solid #a5a5aa;
    background: #fff;
}

.result {
    display: flex;
    flex: 1;
    min-width: 0;
    border: 1px solid #82858f;
    background: #fff;
}

.result-view {
    flex: 1;
    overflow: hidden;
}

.list th, .list td {
    border-color: #d3d3d3;
}

.list th {
    height: 21px;
}

.list td {
    height: 33px;
    white-space: normal;
}

.list td:nth-child(2), .list td:nth-child(3), .list td:nth-child(5), .list td:nth-child(6) {
    background: #fffffa;
}

.list td.picked {
    padding: 1px 1px 0 0;
    border: 2px solid #3aa5d2;
    border-top: none;
}

.list-scroll {
    width: 14px;
}

.list-scroll button {
    height: 13px;
    border-color: #ccc;
}

.list-scroll .thumb {
    flex: 5;
    background: #cacaca;
}

.list-scroll .track {
    flex: 9;
    background: #e1e1e1;
}

/* highlight frames */
.mark {
    position: absolute;
    border: 3px solid #ff3838;
    pointer-events: none;
}

.mark-replace {
    top: 19px;
    right: -5px;
    width: 97px;
    height: 50px;
}

.mark-picker {
    top: 658px;
    left: 214px;
    width: 55px;
    height: 45px;
}
```
